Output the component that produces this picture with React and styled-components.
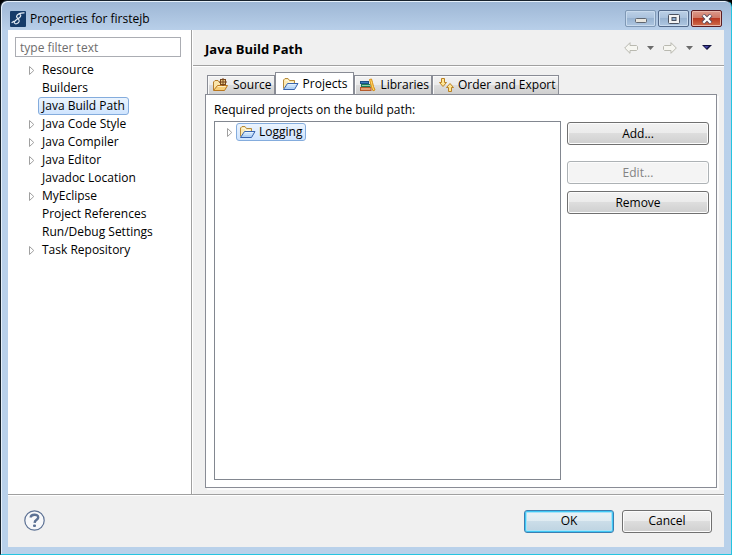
import React from "react";
import styled, { createGlobalStyle, css } from "styled-components";

const GlobalStyle = createGlobalStyle`
  *, *::before, *::after { box-sizing: border-box; }
  body { margin: 0; background: #000; }
  body, button, input {
    font-family: "Open Sans", "Noto Sans", sans-serif;
    font-size: 12px;
    line-height: 18px;
    color: #000;
  }
  button { padding: 0; margin: 0; }
  svg { display: block; flex: none; }
  ul { list-style: none; margin: 0; padding: 0; }
`;

const Window = styled.div`
  min-height: 100vh;
  display: flex;
  flex-direction: column;
  border: 1px solid #17222c;
  border-right-color: #25c4e0;
  border-bottom-color: #25c4e0;
  border-radius: 7px 7px 0 0;
  background: linear-gradient(to bottom, #9db6d4 0, #b9d0ea 30px, #b9d1ea 100%);
  box-shadow: inset 1px 1px 0 #e6f0fa;
  padding: 0 7px 7px;
`;

const TitleBar = styled.header`
  height: 29px;
  display: flex;
  align-items: center;
  gap: 4px;
  padding: 6px 2px 0;
`;

const WindowTitle = styled.h1`
  flex: 1;
  margin: 0;
  font-size: 12px;
  font-weight: 400;
`;

const Controls = styled.div`
  display: flex;
  gap: 2px;
`;

const ControlButton = styled.button`
  width: 31px;
  height: 17px;
  display: grid;
  place-items: center;
  border: 1px solid ${(p) => (p.$close ? "#5b1c22" : p.$faint ? "#7f98b5" : "#53698a")};
  border-radius: 2px;
  box-shadow: inset 0 0 0 1px ${(p) => (p.$close ? "#e9b5a8" : "#c9dbee")};
  background: ${(p) =>
    p.$close
      ? "linear-gradient(#dc9a8c 0, #cf7663 48%, #b93820 50%, #cf6d4c 100%)"
      : "linear-gradient(#bcd0e6 0, #a9c1dc 48%, #98b3d1 50%, #aec6e1 100%)"};
`;

const Client = styled.div`
  flex: 1;
  display: flex;
  flex-direction: column;
  background: #f0f0f0;
`;

const Body = styled.div`
  flex: 1;
  display: flex;
`;

const Sidebar = styled.nav`
  width: 184px;
  flex: none;
  background: #fff;
  border-right: 1px solid #a0a0a0;
  padding: 7px 10px 0 7px;
`;

const FilterInput = styled.input`
  display: block;
  width: 100%;
  height: 20px;
  border: 1px solid #abadb3;
  border-radius: 0;
  padding: 0 4px;
  background: #fff;
  outline: none;
  &::placeholder { color: #6d6d6d; opacity: 1; }
`;

const Tree = styled.ul`
  padding: 4px 0 0 13px;
`;

const TreeItem = styled.li`
  height: 18px;
  display: flex;
  align-items: center;
  gap: 3px;
`;

const Twisty = styled.span`
  width: 7px;
  flex: none;
`;

const NodeLabel = styled.button`
  height: 18px;
  display: flex;
  align-items: center;
  gap: 3px;
  padding: 0 3px;
  border: 1px solid transparent;
  border-radius: 3px;
  background: none;
  line-height: 16px;
  white-space: nowrap;
  ${(p) =>
    p.$selected &&
    css`
      border-color: #84acdd;
      background: linear-gradient(#ebf4fe, #cfe4fe);
    `}
`;

const Content = styled.main`
  flex: 1;
  min-width: 0;
  display: flex;
  flex-direction: column;
  border-left: 1px solid #fff;
`;

const PageHeader = styled.div`
  height: 36px;
  display: flex;
  align-items: center;
  justify-content: space-between;
  padding: 2px 12px 0;
  border-bottom: 1px solid #a0a0a0;
`;

const PageTitle = styled.h2`
  margin: 0;
  font-size: 13px;
  font-weight: 700;
`;

const NavTools = styled.div`
  display: flex;
  align-items: center;
  gap: 9px;
  padding-bottom: 2px;
  button {
    border: 0;
    background: none;
  }
`;

const Page = styled.section`
  flex: 1;
  display: flex;
  flex-direction: column;
  border-top: 1px solid #fff;
  padding: 5px 7px 6px 12px;
`;

const Tabs = styled.div`
  height: 22px;
  display: flex;
  align-items: flex-end;
  padding-left: 2px;
`;

const Tab = styled.button`
  height: 19px;
  display: flex;
  align-items: center;
  gap: 4px;
  padding: 0 2px 0 5px;
  border: 1px solid #898c95;
  border-bottom: 0;
  white-space: nowrap;
  background: linear-gradient(#f2f2f2 0, #ebebeb 48%, #dddddd 50%, #cfcfcf 100%);
  box-shadow: inset 1px 1px 0 #fafafa;
  ${(p) =>
    p.$active &&
    css`
      height: 23px;
      padding: 0 6px 0 7px;
      margin-bottom: -1px;
      background: #fff;
      box-shadow: none;
    `}
`;

const TabPanel = styled.div`
  flex: 1;
  display: grid;
  grid-template-columns: minmax(0, 1fr) 142px;
  grid-template-rows: auto 1fr;
  column-gap: 6px;
  row-gap: 2px;
  padding: 6px 7px 7px 8px;
  border: 1px solid #898c95;
  background: #fff;
  box-shadow: 2px 2px 0 #fbfbfb;
`;

const PanelLabel = styled.div`
  grid-column: 1 / -1;
`;

const ProjectList = styled.ul`
  border: 1px solid #828790;
  && { padding: 1px 0 0 11px; }
`;

const Actions = styled.div`
  display: flex;
  flex-direction: column;
  gap: 7px;
  padding-top: 1px;
`;

const PushButton = styled.button`
  height: 23px;
  width: ${(p) => (p.$footer ? "90px" : "100%")};
  margin-top: ${(p) => (p.$spaced ? 9 : 0)}px;
  border: 1px solid #707070;
  border-radius: 3px;
  line-height: 20px;
  background: linear-gradient(#f2f2f2 0, #ebebeb 48%, #dddddd 50%, #cfcfcf 100%);
  box-shadow: inset 0 0 0 1px #fcfcfc;
  &:disabled {
    color: #838383;
    border-color: #adb2b5;
    background: #f4f4f4;
  }
  ${(p) =>
    p.$primary &&
    css`
      border-color: #3c7fb1;
      background: linear-gradient(#eaf2f6 0, #dfebf1 48%, #cbdde8 50%, #bdd3e1 100%);
      box-shadow: inset 0 0 0 1px #40c8f5, inset 0 0 0 2px #a8e2f7;
    `}
`;

const Footer = styled.footer`
  height: 53px;
  display: flex;
  align-items: center;
  gap: 8px;
  padding: 0 12px 0 16px;
  border-top: 1px solid #a0a0a0;
  box-shadow: inset 0 1px 0 #fff;
`;

const HelpButton = styled.button`
  margin-right: auto;
  padding-bottom: 2px;
  border: 0;
  background: none;
`;

const Logo = () => (
  <svg width="16" height="16" viewBox="0 0 16 16" aria-hidden="true">
    <rect width="16" height="16" rx="1" fill="#153b69" />
    <path
      d="M14.5 1.8C11 1.6 6.8 3 6.6 5.4C6.6 7.4 9.6 7.6 9.2 10.2C8.8 12.4 5.6 13.6 4.4 12C3.6 10 7.2 8.5 9.4 6.7C11.4 5 11 3.4 9.5 3.6M4.4 9.9L1.6 11.8"
      fill="none"
      stroke="#e4edf6"
      strokeWidth="1.2"
    />
  </svg>
);

const Arrow = () => (
  <svg width="7" height="10" viewBox="0 0 7 10" aria-hidden="true">
    <path d="M1.5 1.5L5.8 5.5L1.5 9.5Z" fill="#fff" stroke="#a0a0a0" />
  </svg>
);

const Folder = () => (
  <svg width="16" height="14" viewBox="1 0 16 14" aria-hidden="true">
    <path d="M1.5 11.5V3L3 1.5H6L7.5 3.5H12.5V6" fill="#fbe9b3" stroke="#b58a3b" />
    <path d="M3.5 3.5H6L7 5.5H11" fill="none" stroke="#fff8db" />
    <path d="M1.5 12.5L5.5 6.5H16L12.5 12.5Z" fill="#b3d2f5" stroke="#3864ae" />
    <path d="M5.8 7.5H14.3M4.8 9H13.4" stroke="#e2f1ff" />
  </svg>
);

const SourceFolder = () => (
  <svg width="16" height="14" viewBox="1 0 16 14" aria-hidden="true">
    <path d="M1.5 12V4L3 2.5H6L7.5 4.5H12.5V7" fill="#fae5ab" stroke="#b47c2c" />
    <path d="M1.5 12.5L5.5 7.5H15.5L12.5 12.5Z" fill="#f7ce78" stroke="#b9771f" />
    <path d="M5.8 8.5H13.8" stroke="#ffedc0" />
    <rect x="8.5" y="1.5" width="5" height="5" fill="#eac985" stroke="#78471c" />
    <path d="M11 0V8M7 4H15" stroke="#78471c" />
  </svg>
);

const Books = () => (
  <svg width="16" height="14" viewBox="0 0 16 14" aria-hidden="true">
    <rect x="0.5" y="3.5" width="8" height="2" fill="#3f7fc0" stroke="#1d4f86" />
    <rect x="1.5" y="6.5" width="8.5" height="2" fill="#8fd0ae" stroke="#1f7a55" />
    <rect x="0.5" y="9.5" width="10.5" height="3" fill="#e6a172" stroke="#b55a2a" />
    <path d="M9.5 1.5L11.5 1L12.5 4.5L13.5 8.5L15 12L13 12.8L11.5 9L10.5 5Z" fill="#ffd766" stroke="#d98e12" />
  </svg>
);

const OrderArrows = () => (
  <svg width="16" height="14" viewBox="0 0 16 14" aria-hidden="true">
    <path d="M3.5 0.5H6.5V4.5H8.5L5 8.5L1.5 4.5H3.5Z" fill="#ffe693" stroke="#b98024" />
    <path d="M10.5 13.5H13.5V9.5H15.5L12 5.5L8.5 9.5H10.5Z" fill="#ffe693" stroke="#b98024" />
  </svg>
);

const NavArrow = ({ forward }) => (
  <svg width="14" height="12" viewBox="0 0 14 12" aria-hidden="true">
    <path
      d={
        forward
          ? "M13.3 6L8 0.7V3.5H1.5L0.5 4.5V7.5L1.5 8.5H8V11.3Z"
          : "M0.7 6L6 0.7V3.5H12.5L13.5 4.5V7.5L12.5 8.5H6V11.3Z"
      }
      fill="#f6f6f1"
      stroke="#b9b9b0"
    />
  </svg>
);

const Caret = () => (
  <svg width="7" height="4" viewBox="0 0 7 4" aria-hidden="true">
    <path d="M0 0H7L3.5 4Z" fill="#6b6b6b" />
  </svg>
);

const MenuCaret = () => (
  <svg width="10" height="5" viewBox="0 0 10 5" aria-hidden="true">
    <path d="M0 0H10L5 5Z" fill="#11113c" />
    <path d="M2 1H7L4.5 3.5Z" fill="#4545a4" />
  </svg>
);

const Help = () => (
  <svg width="21" height="21" viewBox="0 0 21 21" aria-hidden="true">
    <circle cx="10.5" cy="10.5" r="9.7" fill="#f7f8fa" stroke="#5c7194" strokeWidth="1.2" />
    <path
      d="M6.7 7.5C6.8 4 14.2 3.6 14.2 7.4C14.2 9.8 10.8 9.7 10.6 12.8"
      fill="none"
      stroke="#5c7194"
      strokeWidth="2.4"
    />
    <rect x="9" y="14.5" width="3" height="2.6" rx="1" fill="#5c7194" />
  </svg>
);

const Minimize = () => (
  <svg width="12" height="10" viewBox="0 0 12 10" aria-hidden="true">
    <rect x="0.5" y="4.5" width="11" height="4" rx="1" fill="#e8e6df" stroke="#5f6670" />
  </svg>
);

const Maximize = () => (
  <svg width="12" height="10" viewBox="0 0 12 10" aria-hidden="true">
    <rect x="0.5" y="0.5" width="11" height="9" rx="1" fill="#f3f3f3" stroke="#4b5261" />
    <rect x="4" y="3.5" width="4" height="3" fill="#8fb0d4" stroke="#4b5261" />
  </svg>
);

const Close = () => (
  <svg width="12" height="10" viewBox="0 0 12 10" aria-hidden="true">
    <path d="M2 1L10 9M10 1L2 9" stroke="#5a4a5b" strokeWidth="4" />
    <path d="M2.3 1.3L9.7 8.7M9.7 1.3L2.3 8.7" stroke="#fff" strokeWidth="2.3" />
  </svg>
);

const nodes = [
  { label: "Resource", expandable: true },
  { label: "Builders" },
  { label: "Java Build Path", selected: true },
  { label: "Java Code Style", expandable: true },
  { label: "Java Compiler", expandable: true },
  { label: "Java Editor", expandable: true },
  { label: "Javadoc Location" },
  { label: "MyEclipse", expandable: true },
  { label: "Project References" },
  { label: "Run/Debug Settings" },
  { label: "Task Repository", expandable: true },
];

const tabs = [
  { label: "Source", Icon: SourceFolder },
  { label: "Projects", Icon: Folder, active: true },
  { label: "Libraries", Icon: Books },
  { label: "Order and Export", Icon: OrderArrows },
];

const TreeNode = ({ label, expandable, selected, icon }) => (
  <TreeItem>
    <Twisty>{expandable && <Arrow />}</Twisty>
    <NodeLabel type="button" $selected={selected}>
      {icon}
      {label}
    </NodeLabel>
  </TreeItem>
);

export default function App() {
  return (
    <>
      <GlobalStyle />
      <Window>
        <TitleBar>
          <Logo />
          <WindowTitle>Properties for firstejb</WindowTitle>
          <Controls>
            <ControlButton type="button" aria-label="Minimize" $faint><Minimize /></ControlButton>
            <ControlButton type="button" aria-label="Maximize"><Maximize /></ControlButton>
            <ControlButton type="button" aria-label="Close" $close><Close /></ControlButton>
          </Controls>
        </TitleBar>
        <Client>
          <Body>
            <Sidebar>
              <FilterInput type="text" placeholder="type filter text" aria-label="Filter" />
              <Tree>
                {nodes.map((n) => (
                  <TreeNode key={n.label} {...n} />
                ))}
              </Tree>
            </Sidebar>
            <Content>
              <PageHeader>
                <PageTitle>Java Build Path</PageTitle>
                <NavTools>
                  <button type="button" aria-label="Back"><NavArrow /></button>
                  <button type="button" aria-label="Back history"><Caret /></button>
                  <button type="button" aria-label="Forward"><NavArrow forward /></button>
                  <button type="button" aria-label="Forward history"><Caret /></button>
                  <button type="button" aria-label="Menu"><MenuCaret /></button>
                </NavTools>
              </PageHeader>
              <Page>
                <Tabs role="tablist">
                  {tabs.map(({ label, Icon, active }) => (
                    <Tab key={label} type="button" role="tab" aria-selected={!!active} $active={active}>
                      <Icon />
                      {label}
                    </Tab>
                  ))}
                </Tabs>
                <TabPanel role="tabpanel">
                  <PanelLabel id="required-label">Required projects on the build path:</PanelLabel>
                  <ProjectList aria-labelledby="required-label">
                    <TreeNode label="Logging" expandable selected icon={<Folder />} />
                  </ProjectList>
                  <Actions>
                    <PushButton type="button">Add...</PushButton>
                    <PushButton type="button" disabled $spaced>Edit...</PushButton>
                    <PushButton type="button">Remove</PushButton>
                  </Actions>
                </TabPanel>
              </Page>
            </Content>
          </Body>
          <Footer>
            <HelpButton type="button" aria-label="Help"><Help /></HelpButton>
            <PushButton type="button" $footer $primary>OK</PushButton>
            <PushButton type="button" $footer>Cancel</PushButton>
          </Footer>
        </Client>
      </Window>
    </>
  );
}
